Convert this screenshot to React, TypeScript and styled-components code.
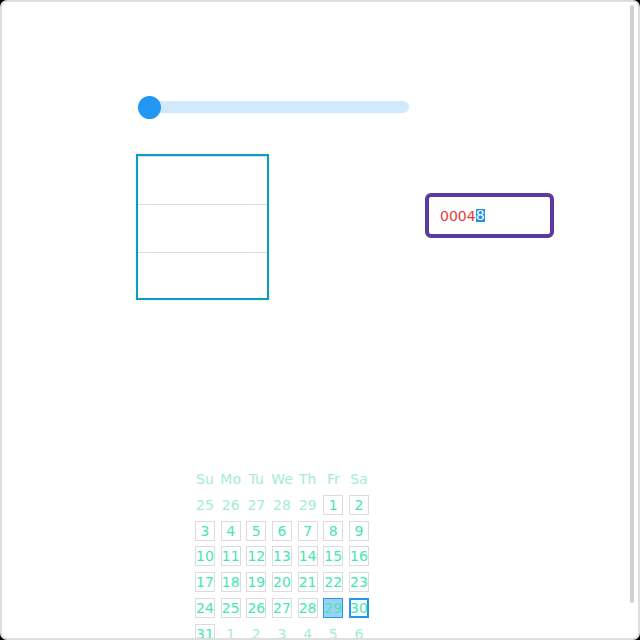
import styled, { createGlobalStyle } from 'styled-components'

const GlobalStyle = createGlobalStyle`
    html, body {
        margin: 0;
        padding: 0;
        background: #000;
    }
    * {
        box-sizing: border-box;
    }
`

const Frame = styled.div`
    position: relative;
    width: 640px;
    height: 640px;
    border: 2px solid #dedede;
    border-radius: 7px;
    background: #fff;
    overflow: hidden;
    font-family: 'DejaVu Sans', sans-serif;
`

const Scroller = styled.div`
    height: 100%;
    overflow-y: auto;
    overflow-x: hidden;
    scrollbar-width: none;

    &::-webkit-scrollbar {
        display: none;
    }
`

// overlay scrollbar thumb, drawn over the scroll area
const ScrollThumb = styled.div`
    position: absolute;
    top: 3px;
    right: 4px;
    width: 4px;
    height: 598px;
    border-radius: 2px;
    background: #d0d0d0;
`

const Content = styled.div`
    display: flex;
    flex-direction: column;
    align-items: flex-start;
    padding: 99px 0 26px 134px;
`

const SliderTrack = styled.div`
    position: relative;
    width: 271px;
    height: 12px;
    margin-left: 2px;
    border-radius: 6px;
    background: #d2e8fb;
`

const SliderThumb = styled.div`
    position: absolute;
    left: 0;
    top: -5px;
    width: 23px;
    height: 23px;
    border-radius: 50%;
    background: #2196f3;
`

const Row = styled.div`
    display: flex;
    align-items: flex-start;
    margin-top: 41px;
`

const ListBox = styled.div`
    width: 133px;
    height: 146px;
    border: 2px solid #0a9bc9;
    box-shadow: 0 0 2px rgba(210, 235, 150, 0.8);
    overflow: hidden;
    background: #fff;
`

const ListItem = styled.div`
    height: 48px;
    border-top: 1px solid #dddddd;
`

const NumberInput = styled.div`
    display: flex;
    align-items: center;
    width: 129px;
    height: 45px;
    margin: 39px 0 0 156px;
    padding: 0 11px;
    border: 4px solid #5c3a9f;
    border-radius: 6px;
    font-size: 14px;
    color: #e53935;
`

const Selected = styled.span`
    display: inline-block;
    line-height: 13px;
    background: #1f8ff0;
    color: #fff;
`

const Calendar = styled.div`
    display: grid;
    grid-template-columns: repeat(7, 20px);
    grid-auto-rows: 20px;
    column-gap: 5.67px;
    row-gap: 5.8px;
    margin: 169px 0 0 59px;
    font-size: 14px;
`

const Cell = styled.div<{ $kind: 'head' | 'out' | 'day' | 'picked' | 'focus' }>`
    display: flex;
    align-items: center;
    justify-content: center;
    white-space: nowrap;
    color: ${p => (p.$kind === 'head' || p.$kind === 'out' ? '#a4ecd3' : '#46e6b0')};
    background: ${p => (p.$kind === 'picked' ? '#9fd0f7' : 'transparent')};
    border: ${p =>
        p.$kind === 'picked'
            ? '1px solid #2196f3'
            : p.$kind === 'focus'
            ? '2px solid #2196f3'
            : p.$kind === 'day'
            ? '1px solid #dcdcdc'
            : 'none'};
`

const HEADS = ['Su', 'Mo', 'Tu', 'We', 'Th', 'Fr', 'Sa']

type Day = { label: number; kind: 'out' | 'day' | 'picked' | 'focus' }

function buildDays(): Day[] {
    const days: Day[] = []
    for (let d = 25; d <= 29; d++) days.push({ label: d, kind: 'out' })
    for (let d = 1; d <= 31; d++) {
        days.push({ label: d, kind: d === 29 ? 'picked' : d === 30 ? 'focus' : 'day' })
    }
    for (let d = 1; d <= 6; d++) days.push({ label: d, kind: 'out' })
    return days
}

export default function App() {
    const days = buildDays()
    return (
        <>
            <GlobalStyle />
            <Frame>
                <Scroller>
                    <Content>
                        <SliderTrack>
                            <SliderThumb />
                        </SliderTrack>
                        <Row>
                            <ListBox>
                                <ListItem />
                                <ListItem />
                                <ListItem />
                            </ListBox>
                            <NumberInput>
                                0004<Selected>8</Selected>
                            </NumberInput>
                        </Row>
                        <Calendar>
                            {HEADS.map(h => (
                                <Cell key={h} $kind="head">{h}</Cell>
                            ))}
                            {days.map((d, i) => (
                                <Cell key={i} $kind={d.kind}>{d.label}</Cell>
                            ))}
                        </Calendar>
                    </Content>
                </Scroller>
                <ScrollThumb />
            </Frame>
        </>
    )
}
